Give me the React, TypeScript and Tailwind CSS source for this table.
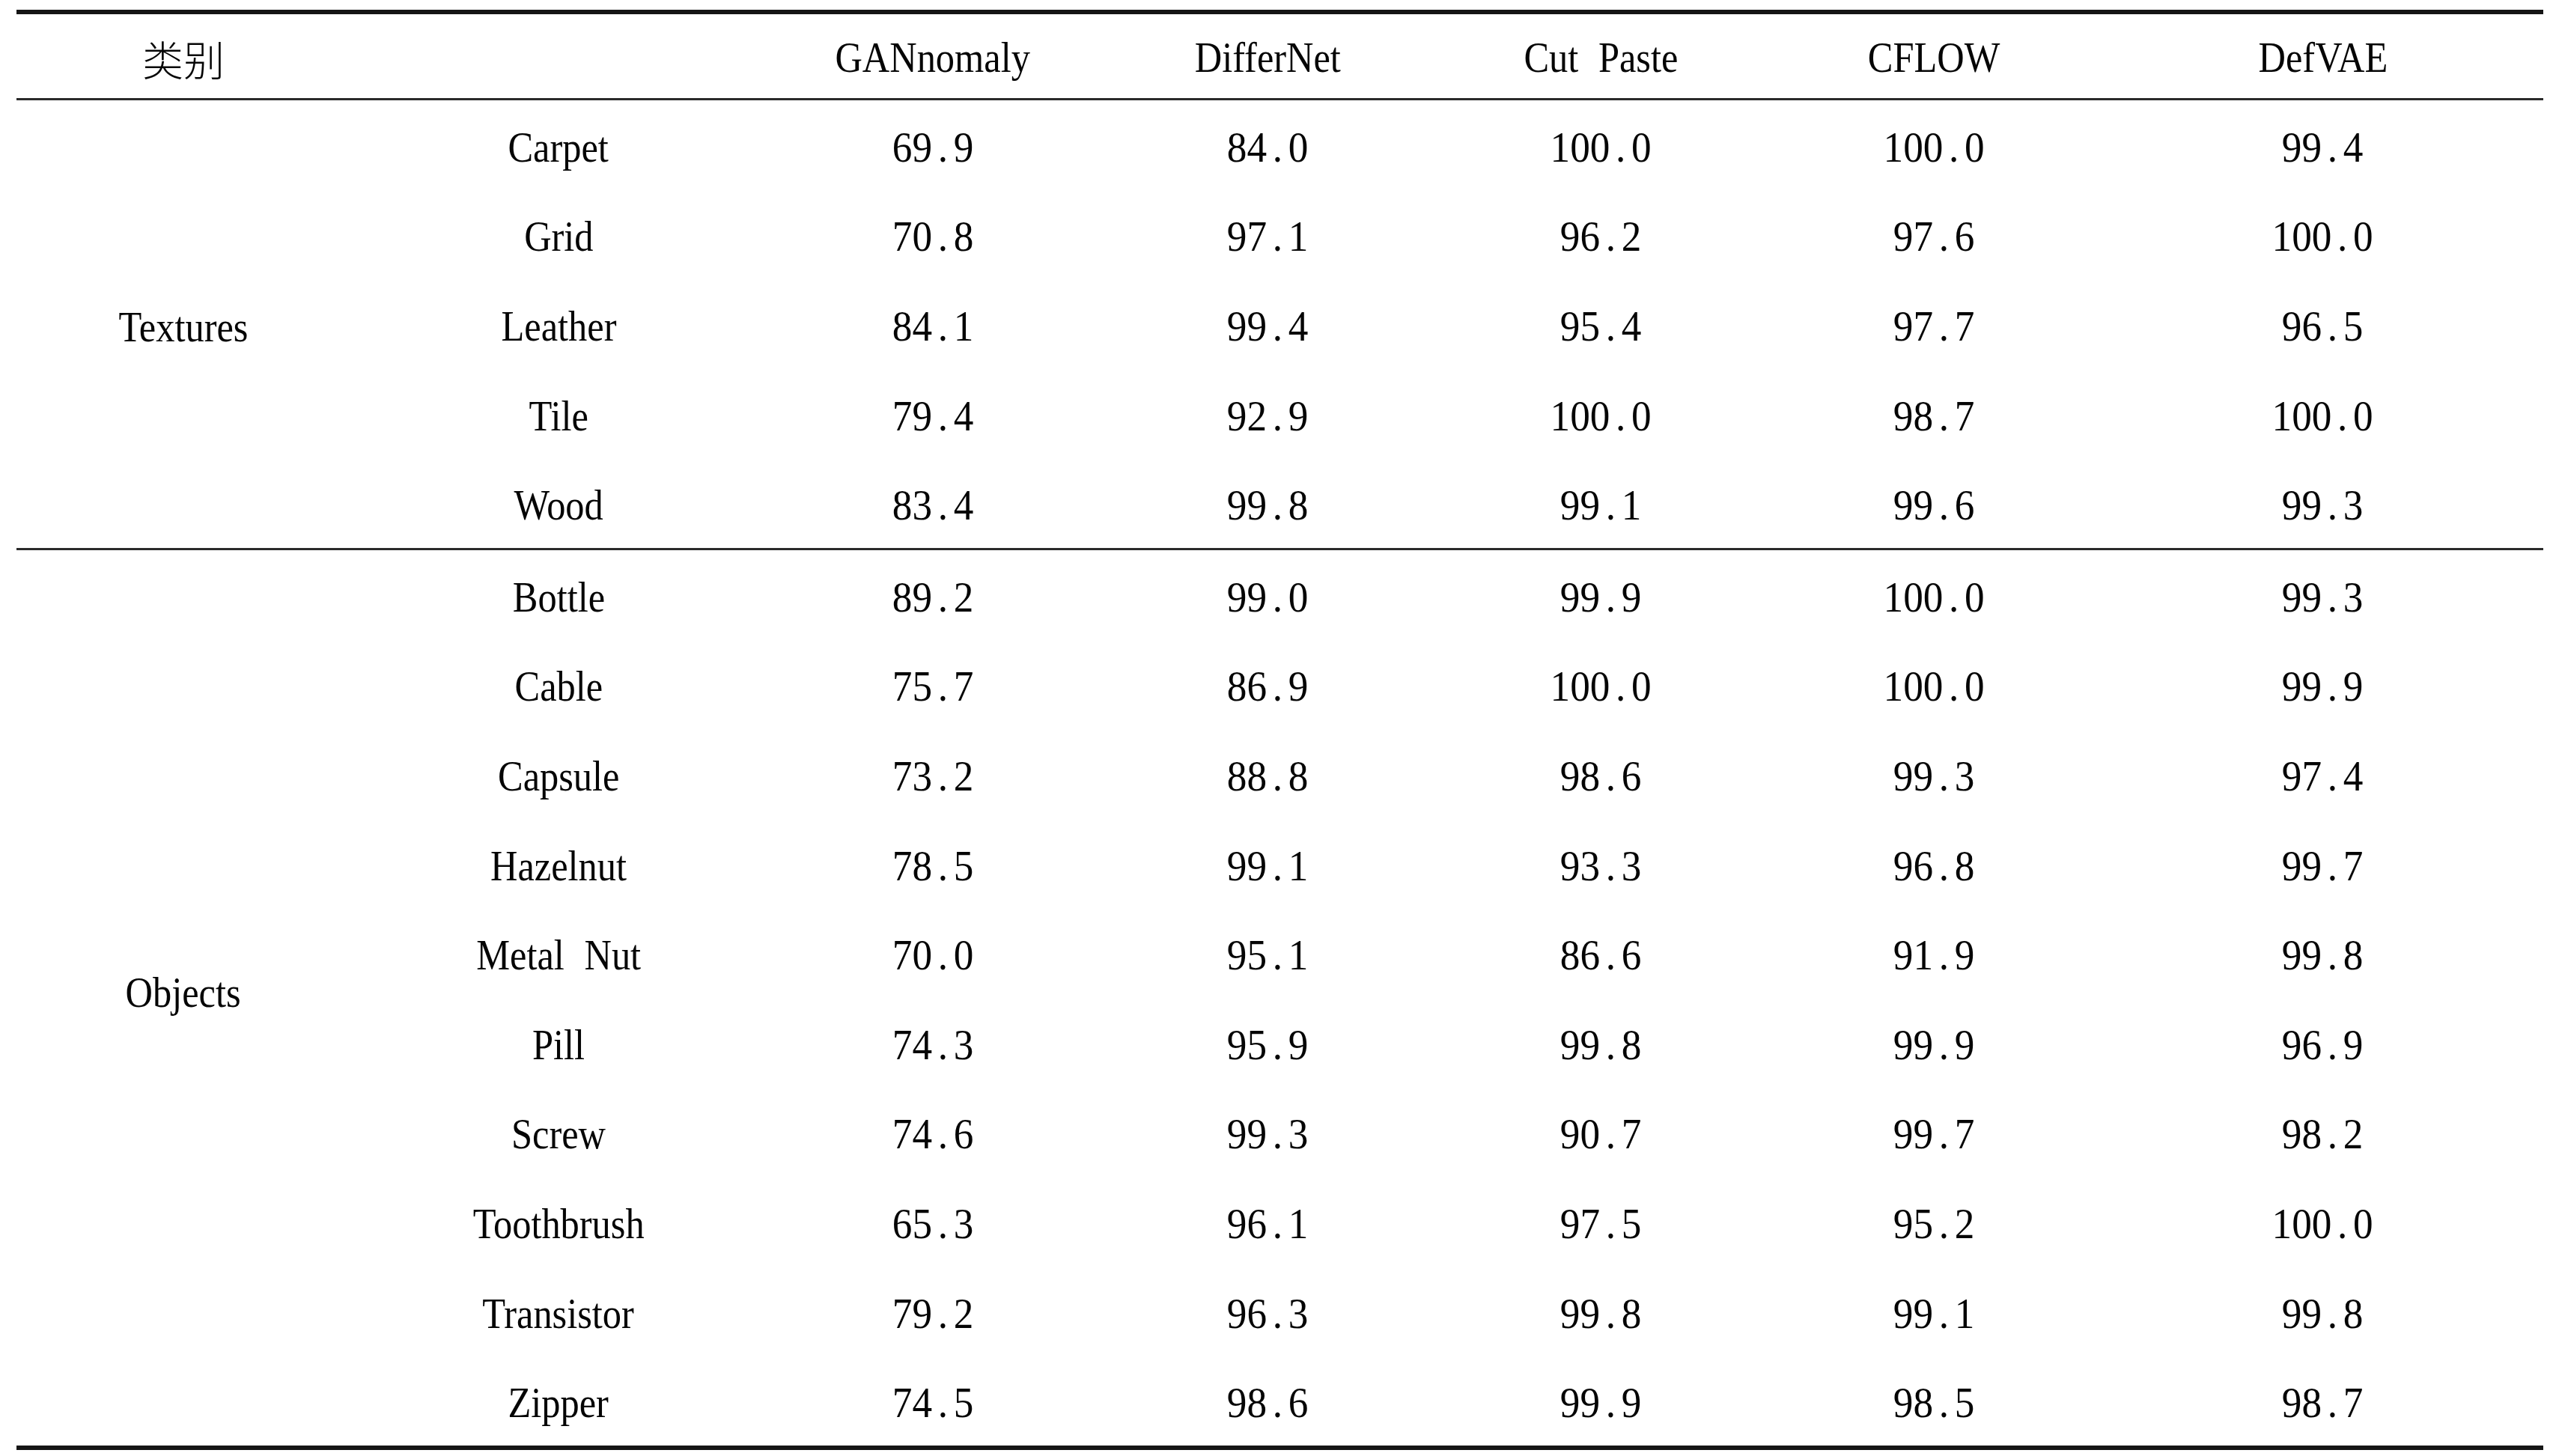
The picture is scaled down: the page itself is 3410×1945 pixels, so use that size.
import React from "react";

const serif = "font-['Liberation_Serif','Times_New_Roman',serif]";

const textures: [string, string[]][] = [
  ["Carpet", ["69.9", "84.0", "100.0", "100.0", "99.4"]],
  ["Grid", ["70.8", "97.1", "96.2", "97.6", "100.0"]],
  ["Leather", ["84.1", "99.4", "95.4", "97.7", "96.5"]],
  ["Tile", ["79.4", "92.9", "100.0", "98.7", "100.0"]],
  ["Wood", ["83.4", "99.8", "99.1", "99.6", "99.3"]],
];

const objects: [string, string[]][] = [
  ["Bottle", ["89.2", "99.0", "99.9", "100.0", "99.3"]],
  ["Cable", ["75.7", "86.9", "100.0", "100.0", "99.9"]],
  ["Capsule", ["73.2", "88.8", "98.6", "99.3", "97.4"]],
  ["Hazelnut", ["78.5", "99.1", "93.3", "96.8", "99.7"]],
  ["Metal Nut", ["70.0", "95.1", "86.6", "91.9", "99.8"]],
  ["Pill", ["74.3", "95.9", "99.8", "99.9", "96.9"]],
  ["Screw", ["74.6", "99.3", "90.7", "99.7", "98.2"]],
  ["Toothbrush", ["65.3", "96.1", "97.5", "95.2", "100.0"]],
  ["Transistor", ["79.2", "96.3", "99.8", "99.1", "99.8"]],
  ["Zipper", ["74.5", "98.6", "99.9", "98.5", "98.7"]],
];

function Name({ children }: { children: React.ReactNode }) {
  return (
    <span className="inline-block scale-x-90 whitespace-nowrap [word-spacing:0.28em]">
      {children}
    </span>
  );
}

function Num({ value }: { value: string }) {
  const [a, b] = value.split(".");
  return (
    <span className="inline-block scale-x-95 whitespace-nowrap">
      {a}
      <span className="inline-block w-[0.54em] text-center">.</span>
      {b}
    </span>
  );
}

function Row({ name, vals }: { name: string; vals: string[] }) {
  return (
    <div className="grid h-[119.6px] grid-cols-[556px_444px_450px_440px_450px_589px] items-center pt-[6px] text-center">
      <div>
        <Name>{name}</Name>
      </div>
      {vals.map((v, i) => (
        <div key={i}>
          <Num value={v} />
        </div>
      ))}
    </div>
  );
}

export default function App() {
  return (
    <div className="min-h-[1945px] w-[3410px] bg-white pt-[13px]">
      <div
        className={`ml-[22px] w-[3375px] border-t-[6px] border-b-[6px] border-[#151515] text-[56px] leading-none text-[#050505] ${serif}`}
      >
        <div className="grid h-[115px] grid-cols-[446px_556px_444px_450px_440px_450px_589px] items-center border-b-[3px] border-[#2a2a2a] pt-[4px] text-center">
          <div className="font-['Noto_Sans_CJK_SC','Noto_Sans_CJK_JP',sans-serif] text-[55px] font-light">
            类别
          </div>
          <div></div>
          <div>
            <Name>GANnomaly</Name>
          </div>
          <div>
            <Name>DifferNet</Name>
          </div>
          <div>
            <Name>Cut Paste</Name>
          </div>
          <div>
            <Name>CFLOW</Name>
          </div>
          <div>
            <Name>DefVAE</Name>
          </div>
        </div>

        <div className="flex border-b-[3px] border-[#2a2a2a]">
          <div className="flex w-[446px] shrink-0 items-center justify-center pt-[8px]">
            <Name>Textures</Name>
          </div>
          <div className="flex-1">
            {textures.map(([n, v]) => (
              <Row key={n} name={n} vals={v} />
            ))}
          </div>
        </div>

        <div className="flex">
          <div className="flex w-[446px] shrink-0 items-center justify-center pb-[14px]">
            <Name>Objects</Name>
          </div>
          <div className="flex-1">
            {objects.map(([n, v]) => (
              <Row key={n} name={n} vals={v} />
            ))}
          </div>
        </div>
      </div>
    </div>
  );
}
